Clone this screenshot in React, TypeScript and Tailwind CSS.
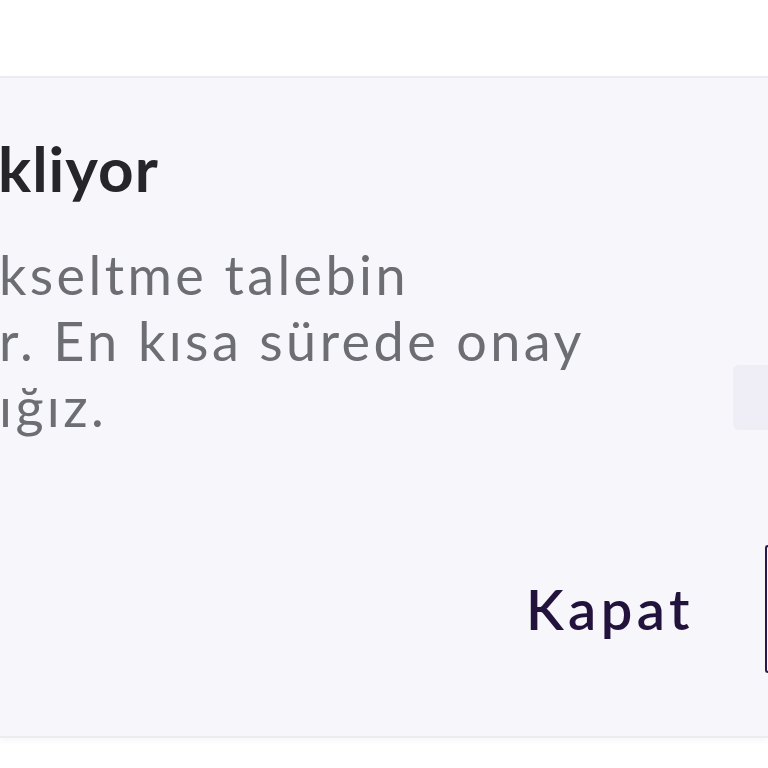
export default function App() {
  return (
    <div className="flex h-[768px] w-[768px] flex-col overflow-hidden bg-white font-['Lato',sans-serif]">
      <div className="h-[76px] shrink-0" />
      <div className="flex h-[662px] shrink-0 flex-col border-y-2 border-[#ecebf0] bg-[#f7f6fb] shadow-[0_3px_6px_rgba(0,0,0,0.04)]">
        <h2 className="mt-[59px] -ml-[2px] text-[62px] font-bold leading-none tracking-[1px] text-[#262529]">
          kliyor
        </h2>
        <div className="mt-[43px] flex items-start">
          <p className="flex-1 -ml-[1px] text-[54px] leading-[66px] tracking-[3.4px] text-[#6d6e73]">
            kseltme talebin
            <br />
            r. En kısa sürede onay
            <br />
            ığız.
          </p>
          <div className="mt-[123px] h-[65px] w-[35px] shrink-0 rounded-l-md bg-[#efedf6]" />
        </div>
        <div className="mt-[105px] flex items-center justify-end">
          <button className="mr-[71px] text-[56px] font-semibold leading-[1.2] tracking-[4.5px] text-[#22133d]">
            Kapat
          </button>
          <div className="h-[128px] w-[3px] rounded-l-md border-y-2 border-l-2 border-[#2b1848]" />
        </div>
      </div>
    </div>
  );
}
